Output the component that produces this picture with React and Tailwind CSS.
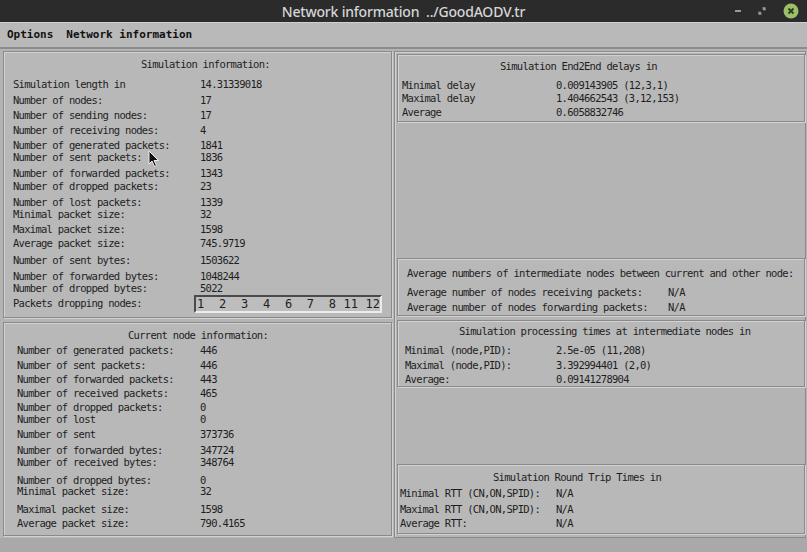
import { useState } from "react";

// rows of the "Simulation information" panel: label, value, top margin
const simRows = [
    ["Simulation length in", "14.31339018", "mt-[9px]"],
    ["Number of nodes:", "17", "mt-[4px]"],
    ["Number of sending nodes:", "17", "mt-[3px]"],
    ["Number of receiving nodes:", "4", "mt-[3px]"],
    ["Number of generated packets:", "1841", "mt-[3px]"],
    ["Number of sent packets:", "1836", "mt-0"],
    ["Number of forwarded packets:", "1343", "mt-[4px]"],
    ["Number of dropped packets:", "23", "mt-[1px]"],
    ["Number of lost packets:", "1339", "mt-[4px]"],
    ["Minimal packet size:", "32", "mt-0"],
    ["Maximal packet size:", "1598", "mt-[3px]"],
    ["Average packet size:", "745.9719", "mt-[2px]"],
    ["Number of sent bytes:", "1503622", "mt-[5px]"],
    ["Number of forwarded bytes:", "1048244", "mt-[4px]"],
    ["Number of dropped bytes:", "5022", "mt-0"],
];

const nodeRows = [
    ["Number of generated packets:", "446", "mt-[4px]"],
    ["Number of sent packets:", "446", "mt-[3px]"],
    ["Number of forwarded packets:", "443", "mt-[2px]"],
    ["Number of received packets:", "465", "mt-[2px]"],
    ["Number of dropped packets:", "0", "mt-[2px]"],
    ["Number of lost", "0", "mt-0"],
    ["Number of sent", "373736", "mt-[3px]"],
    ["Number of forwarded bytes:", "347724", "mt-[4px]"],
    ["Number of received bytes:", "348764", "mt-0"],
    ["Number of dropped bytes:", "0", "mt-[6px]"],
    ["Minimal packet size:", "32", "mt-[-1px]"],
    ["Maximal packet size:", "1598", "mt-[6px]"],
    ["Average packet size:", "790.4165", "mt-[2px]"],
];

const panel =
    "border border-[#8a8a8a] bg-[#b8b8b8] shadow-[inset_1px_1px_0_#d2d2d2,1px_1px_0_#d2d2d2]";

function Row({ label, value, mt, w }) {
    return (
        <div className={`flex h-[12px] items-center whitespace-pre ${mt}`}>
            <span className={`shrink-0 ${w}`}>{label}</span>
            <span>{value}</span>
        </div>
    );
}

function Title({ children, cls }) {
    return <div className={`h-[12px] leading-[12px] whitespace-pre ${cls}`}>{children}</div>;
}

export default function App() {
    const [menu] = useState(["Options", "Network information"]);

    return (
        <div className="relative w-[807px] h-[552px] overflow-hidden flex flex-col bg-[#b4b4b4] text-[#1e1e1e]">
            {/* window title bar */}
            <div className="relative h-[22px] shrink-0 bg-[#2b2b2b] flex items-center justify-center">
                <span className="text-[14px] font-medium text-[#d6d6d6] tracking-[-0.2px] [font-family:'Noto_Sans',sans-serif]">
                    Network information&nbsp;&nbsp;../GoodAODV.tr
                </span>
                <div className="absolute right-[8px] top-0 h-[22px] flex items-center gap-[17px]">
                    <div className="w-[6px] h-[2px] bg-[#9a9a9a]" />
                    <svg width="8" height="8" viewBox="0 0 8 8">
                        <path d="M1 7 L3 5 M5 3 L7 1 M4.5 1 H7 V3.5 M1 4.5 V7 H3.5" stroke="#9a9a9a" strokeWidth="1.3" fill="none" />
                    </svg>
                    <svg width="16" height="16" viewBox="0 0 16 16">
                        <circle cx="8" cy="8" r="7.5" fill="#9cc06a" />
                        <path d="M5.5 5.5 L10.5 10.5 M10.5 5.5 L5.5 10.5" stroke="#2d3a1e" strokeWidth="1.8" />
                    </svg>
                </div>
            </div>

            {/* menu bar */}
            <div className="h-[27px] shrink-0 bg-[#b9b9b9] border-t border-[#d0d0d0] border-b-2 border-b-[#8c8c8c] flex items-center gap-[13px] pl-[7px] text-[11px] font-bold text-[#111] [font-family:'DejaVu_Sans_Mono',monospace]">
                {menu.map((m) => (
                    <span key={m}>{m}</span>
                ))}
            </div>

            {/* main area */}
            <div className="flex gap-[2px] pl-[3px] pt-[2px] text-[10.5px] tracking-[-0.72px] [font-family:'DejaVu_Sans_Mono',monospace]">
                {/* left column */}
                <div className="w-[389px] flex flex-col">
                    <div className={`${panel} h-[267px] pt-[6px]`}>
                        <Title cls="pl-[137px]">Simulation information:</Title>
                        <div className="pl-[9px]">
                            {simRows.map(([l, v, mt]) => (
                                <Row key={l} label={l} value={v} mt={mt} w="w-[187px]" />
                            ))}
                            <div className="flex h-[12px] items-center mt-[3px] whitespace-pre">
                                <span className="w-[181px] shrink-0">Packets dropping nodes:</span>
                                <div className="h-[18px] w-[188px] flex items-center pl-[1px] overflow-hidden bg-[#bdbdbd] border-t-2 border-l-2 border-[#4a4a4a] border-r-2 border-b-2 border-r-[#ececec] border-b-[#ececec] text-[12px] tracking-[0.1px]">
                                    {"1  2  3  4  6  7  8 11 12"}
                                </div>
                            </div>
                        </div>
                    </div>

                    <div className={`${panel} h-[214px] mt-[4px] pt-[6px]`}>
                        <Title cls="pl-[124px]">Current node information:</Title>
                        <div className="pl-[13px]">
                            {nodeRows.map(([l, v, mt], i) => (
                                <Row key={i} label={l} value={v} mt={mt} w="w-[183px]" />
                            ))}
                        </div>
                    </div>
                </div>

                {/* right column */}
                <div className="w-[412px] h-[487px] border border-[#8a8a8a] shadow-[inset_1px_1px_0_#d2d2d2] pl-[2px] pt-[2px] flex flex-col">
                    <div className={`${panel} h-[68px] pt-[5px]`}>
                        <Title cls="pl-[102px]">Simulation End2End delays in</Title>
                        <div className="pl-[4px]">
                            <Row label="Minimal delay" value="0.009143905 (12,3,1)" mt="mt-[8px]" w="w-[154px]" />
                            <Row label="Maximal delay" value="1.404662543 (3,12,153)" mt="mt-[1px]" w="w-[154px]" />
                            <Row label="Average" value="0.6058832746" mt="mt-[2px]" w="w-[154px]" />
                        </div>
                    </div>

                    <div className="h-[136px] shrink-0" />

                    <div className={`${panel} h-[58px] pt-[8px]`}>
                        <Title cls="pl-[9px]">Average numbers of intermediate nodes between current and other node:</Title>
                        <div className="pl-[9px]">
                            <Row label="Average number of nodes receiving packets:" value="N/A" mt="mt-[8px]" w="w-[261px]" />
                            <Row label="Average number of nodes forwarding packets:" value="N/A" mt="mt-[3px]" w="w-[261px]" />
                        </div>
                    </div>

                    <div className={`${panel} h-[67px] mt-[4px] pt-[4px]`}>
                        <Title cls="pl-[61px]">Simulation processing times at intermediate nodes in</Title>
                        <div className="pl-[7px]">
                            <Row label="Minimal (node,PID):" value="2.5e-05 (11,208)" mt="mt-[8px]" w="w-[151px]" />
                            <Row label="Maximal (node,PID):" value="3.392994401 (2,0)" mt="mt-[3px]" w="w-[151px]" />
                            <Row label="Average:" value="0.09141278904" mt="mt-[2px]" w="w-[151px]" />
                        </div>
                    </div>

                    <div className="h-[77px] shrink-0" />

                    <div className={`${panel} h-[70px] pt-[6px]`}>
                        <Title cls="pl-[95px]">Simulation Round Trip Times in</Title>
                        <div className="pl-[2px]">
                            <Row label="Minimal RTT (CN,ON,SPID):" value="N/A" mt="mt-[5px]" w="w-[156px]" />
                            <Row label="Maximal RTT (CN,ON,SPID):" value="N/A" mt="mt-[4px]" w="w-[156px]" />
                            <Row label="Average RTT:" value="N/A" mt="mt-[2px]" w="w-[156px]" />
                        </div>
                    </div>
                </div>
            </div>

            {/* darker strip under the panels */}
            <div className="flex-1 bg-[#a9a9a9]" />

            {/* mouse pointer over the panel */}
            <svg className="absolute left-[148px] top-[150px]" width="12" height="18" viewBox="0 0 12 18">
                <path d="M1 1 L1 14 L4 11 L6.5 16.5 L8.5 15.5 L6 10.5 L10.5 10.5 Z" fill="#111" stroke="#eee" strokeWidth="1" />
            </svg>
        </div>
    );
}
